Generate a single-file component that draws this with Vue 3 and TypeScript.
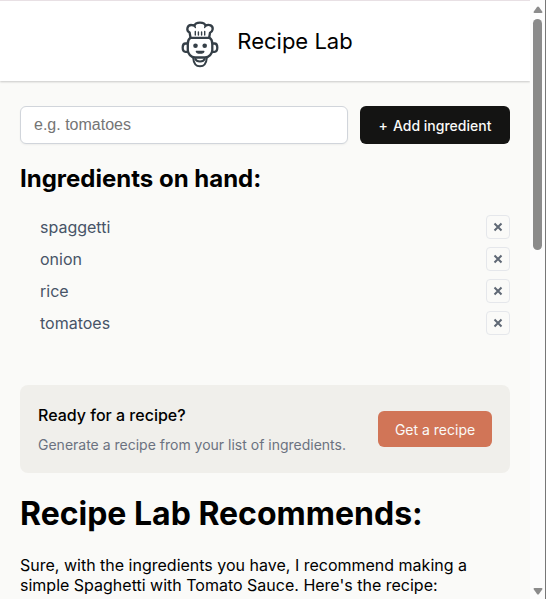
<script setup lang="ts">
import { ref } from 'vue'

const draft = ref('')
const ingredients = ref<string[]>(['spaggetti', 'onion', 'rice', 'tomatoes'])

function addIngredient(): void {
  const name = draft.value.trim()
  if (name) ingredients.value.push(name)
  draft.value = ''
}

function removeIngredient(index: number): void {
  ingredients.value.splice(index, 1)
}
</script>

<template>
  <div class="window">
    <div class="page">
      <header class="header">
        <svg class="logo" viewBox="0 0 38 47" fill="none" stroke="#353f47" stroke-width="2.3" stroke-linecap="round" stroke-linejoin="round" aria-hidden="true">
          <path d="M9.500 16.500 L8.600 11.500 C4.800 9.500 6 3.800 10.600 4 C11.800 4 12.800 4.300 13.500 4.800 C14.500 .6 23.500 .6 24.500 4.800 C28 2.500 32.400 4.700 31.600 8.500 C31.300 10.200 30.300 11.200 29 11.700 L28.200 16.500" />
          <path d="M13.500 4.800 L14.300 6.500 M24.500 4.800 L23.700 6.500" stroke-width="1.500" />
          <path d="M14.300 10.500 V14 M17.400 11 V14 M20.600 11 V14 M23.700 10.500 V14" stroke-width="1.400" />
          <path d="M9.500 16.800 H28.500 C30.500 18 31.300 20 31.300 23 V29 C31.300 33 28 36.200 24 36.500 H14 C10 36.200 6.800 33 6.800 29 V23 C6.800 20 7.500 18 9.500 16.800 Z" />
          <path d="M6.500 22.500 H4.500 C2.500 22.500 1.700 24 1.700 26.500 S2.500 30.800 4.500 30.800 H6.800 M31.500 22.500 H33.500 C35.500 22.500 36.300 24 36.300 26.500 S35.500 30.800 33.500 30.800 H31.200" />
          <circle cx="14.500" cy="24.800" r="2.300" fill="#353f47" stroke="none" />
          <circle cx="23.700" cy="24.800" r="2.300" fill="#353f47" stroke="none" />
          <path d="M15.300 30.300 H22.900 C22.500 32.700 15.700 32.700 15.300 30.300 Z" fill="#353f47" stroke-width="1.200" />
          <path d="M12.200 37 C12.600 42 14.500 45.300 19 45.300 S25.400 42 25.800 37 M14.500 38 C15.500 41.300 22.500 41.300 23.500 38" stroke-width="2" />
        </svg>
        <span class="brand">Recipe Lab</span>
      </header>

      <main class="content">
        <form class="add-form" @submit.prevent="addIngredient">
          <input v-model="draft" class="add-input" type="text" placeholder="e.g. tomatoes" aria-label="Add ingredient" />
          <button class="add-button" type="submit"><span>+</span>Add ingredient</button>
        </form>

        <h2 class="list-title">Ingredients on hand:</h2>
        <ul class="ingredients">
          <li v-for="(item, index) in ingredients" :key="item" class="ingredient">
            <span>{{ item }}</span>
            <button class="remove" type="button" :aria-label="`Remove ${item}`" @click="removeIngredient(index)">
              <svg viewBox="0 0 10 10" aria-hidden="true"><path d="M1.500 1.500 L8.500 8.500 M8.500 1.500 L1.500 8.500" /></svg>
            </button>
          </li>
        </ul>

        <section class="ready">
          <div class="ready-text">
            <h3>Ready for a recipe?</h3>
            <p>Generate a recipe from your list of ingredients.</p>
          </div>
          <button class="get-button" type="button">Get a recipe</button>
        </section>

        <section class="recipe">
          <h1>Recipe Lab Recommends:</h1>
          <p>Sure, with the ingredients you have, I recommend making a simple Spaghetti with Tomato Sauce. Here's the recipe:</p>
        </section>
      </main>
    </div>

    <div class="scrollbar" aria-hidden="true">
      <svg class="arrow" viewBox="0 0 10 8"><path d="M4 1 Q5 0 6 1 L9.500 6 Q9.500 7 8.500 7 H1.500 Q.5 7 .5 6 Z" /></svg>
      <div class="track"><div class="thumb"></div></div>
      <svg class="arrow" viewBox="0 0 10 8"><path d="M4 7 Q5 8 6 7 L9.500 2 Q9.500 1 8.500 1 H1.500 Q.5 1 .5 2 Z" /></svg>
    </div>
  </div>
</template>

<style>
body {
  background: #fafaf8;
}
</style>

<style scoped>
* {
  box-sizing: border-box;
}

.window {
  display: grid;
  grid-template-columns: minmax(0, 1fr) 16px;
  height: 100vh;
  overflow: hidden;
  font-family: Inter, "Liberation Sans", sans-serif;
  color: #000;
  background: #fafaf8;
}

.page {
  overflow: hidden;
}

h1,
h2,
h3,
p,
ul {
  margin: 0;
  padding: 0;
}

button {
  font-family: inherit;
  cursor: pointer;
}

.header {
  display: flex;
  align-items: center;
  justify-content: center;
  gap: 18px;
  padding: 20px 16px 13px 20px;
  background: #fff;
  border-top: 1px solid #e8e0e4;
  box-shadow: 0 1px 2px rgba(0, 0, 0, 0.2);
}

.logo {
  width: 38px;
  height: 47px;
}

.brand {
  font-size: 22px;
  line-height: 28px;
  padding-bottom: 8px;
}

.content {
  padding: 25px 20px 0;
}

.add-form {
  display: flex;
  gap: 12px;
  height: 38px;
}

.add-input {
  flex: 1;
  min-width: 0;
  padding: 0 13px;
  border: 1px solid #d1d5db;
  border-radius: 6px;
  background: #fff;
  box-shadow: 0 1px 2px rgba(0, 0, 0, 0.05);
  font-family: "Liberation Sans", Arial, sans-serif;
  font-size: 16px;
}

.add-input::placeholder {
  color: #757575;
}

.add-button {
  display: flex;
  align-items: center;
  justify-content: center;
  gap: 5px;
  width: 150px;
  padding: 0;
  border: 0;
  border-radius: 6px;
  background: #141413;
  color: #fafaf8;
  font-size: 14px;
  font-weight: 500;
}

.list-title {
  margin-top: 20px;
  font-size: 24px;
  line-height: 29px;
  font-weight: 700;
}

.ingredients {
  display: grid;
  gap: 8px;
  margin-top: 22px;
  padding-left: 20px;
  list-style: none;
}

.ingredient {
  display: flex;
  align-items: center;
  justify-content: space-between;
  height: 24px;
  color: #475467;
  font-size: 16px;
}

.remove {
  display: grid;
  place-items: center;
  width: 24px;
  height: 24px;
  padding: 0;
  border: 1px solid #e5e7eb;
  border-radius: 4px;
  background: transparent;
}

.remove svg {
  width: 10px;
  height: 10px;
  fill: none;
  stroke: #5f6875;
  stroke-width: 2;
}

.ready {
  display: flex;
  align-items: center;
  justify-content: space-between;
  margin-top: 50px;
  padding: 18px;
  border-radius: 8px;
  background: #f0efeb;
}

.ready-text {
  display: grid;
  gap: 8px;
}

.ready h3 {
  font-size: 16px;
  line-height: 24px;
  font-weight: 500;
}

.ready p {
  color: #6b7280;
  font-size: 14px;
  line-height: 20px;
}

.get-button {
  width: 114px;
  height: 36px;
  padding: 0;
  border: 0;
  border-radius: 6px;
  background: #d17557;
  color: #fafaf8;
  font-size: 14px;
}

.recipe {
  margin-top: 21px;
}

.recipe h1 {
  font-size: 32px;
  line-height: 39px;
  font-weight: 700;
}

.recipe p {
  margin-top: 22px;
  font-size: 16px;
  line-height: 20px;
}

.scrollbar {
  display: flex;
  flex-direction: column;
  align-items: center;
  gap: 5px;
  padding: 6px 0 4px;
  border-right: 1px solid #777;
  background: #fcfcfc;
}

.arrow {
  width: 10px;
  height: 8px;
  fill: #8b8b8b;
}

.track {
  flex: 1;
  width: 9px;
}

.thumb {
  height: 41%;
  border-radius: 5px;
  background: #8b8b8b;
}
</style>
